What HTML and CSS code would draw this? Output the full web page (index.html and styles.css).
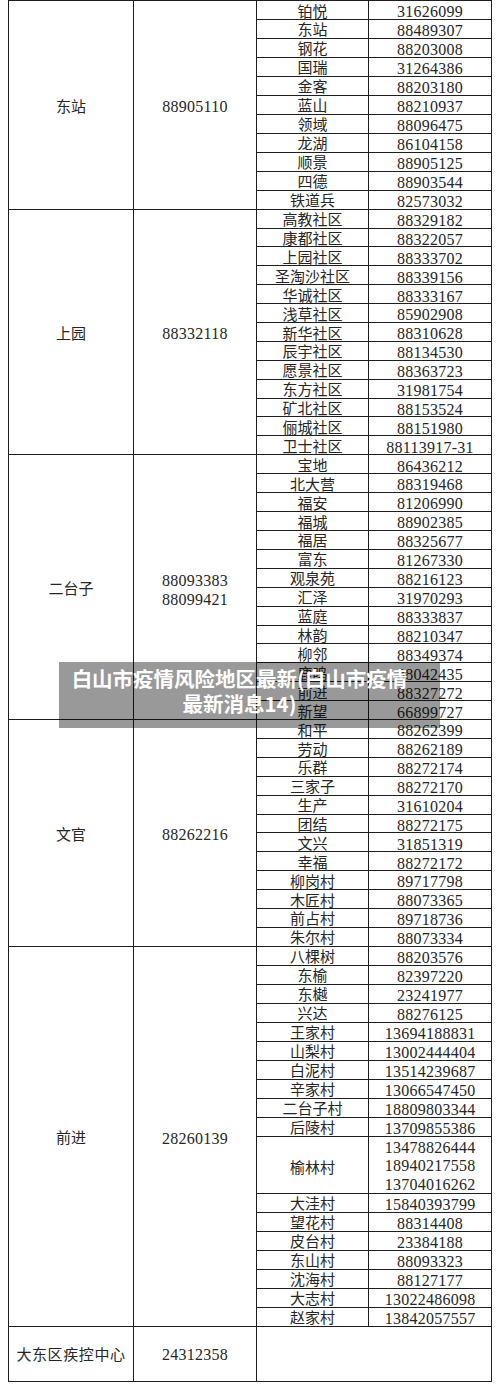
FILE: index.html
```html
<!DOCTYPE html>
<html lang="zh-CN">
<head>
<meta charset="utf-8">
<title>白山市疫情风险地区最新(白山市疫情最新消息14)</title>
<link rel="stylesheet" href="styles.css">
</head>
<body>
<div class="page">
  <div class="sheet">
    <!-- 东站 -->
    <div class="area span11">东站</div>
    <div class="phone span11">88905110</div>
    <div class="name">铂悦</div><div class="tel">31626099</div>
    <div class="name">东站</div><div class="tel">88489307</div>
    <div class="name">钢花</div><div class="tel">88203008</div>
    <div class="name">国瑞</div><div class="tel">31264386</div>
    <div class="name">金客</div><div class="tel">88203180</div>
    <div class="name">蓝山</div><div class="tel">88210937</div>
    <div class="name">领域</div><div class="tel">88096475</div>
    <div class="name">龙湖</div><div class="tel">86104158</div>
    <div class="name">顺景</div><div class="tel">88905125</div>
    <div class="name">四德</div><div class="tel">88903544</div>
    <div class="name">铁道兵</div><div class="tel">82573032</div>

    <!-- 上园 -->
    <div class="area span13">上园</div>
    <div class="phone span13">88332118</div>
    <div class="name">高教社区</div><div class="tel">88329182</div>
    <div class="name">康都社区</div><div class="tel">88322057</div>
    <div class="name">上园社区</div><div class="tel">88333702</div>
    <div class="name">圣淘沙社区</div><div class="tel">88339156</div>
    <div class="name">华诚社区</div><div class="tel">88333167</div>
    <div class="name">浅草社区</div><div class="tel">85902908</div>
    <div class="name">新华社区</div><div class="tel">88310628</div>
    <div class="name">辰宇社区</div><div class="tel">88134530</div>
    <div class="name">愿景社区</div><div class="tel">88363723</div>
    <div class="name">东方社区</div><div class="tel">31981754</div>
    <div class="name">矿北社区</div><div class="tel">88153524</div>
    <div class="name">俪城社区</div><div class="tel">88151980</div>
    <div class="name">卫士社区</div><div class="tel">88113917-31</div>

    <!-- 二台子 -->
    <div class="area span14">二台子</div>
    <div class="phone span14 two"><span>88093383</span><span>88099421</span></div>
    <div class="name">宝地</div><div class="tel">86436212</div>
    <div class="name">北大营</div><div class="tel">88319468</div>
    <div class="name">福安</div><div class="tel">81206990</div>
    <div class="name">福城</div><div class="tel">88902385</div>
    <div class="name">福居</div><div class="tel">88325677</div>
    <div class="name">富东</div><div class="tel">81267330</div>
    <div class="name">观泉苑</div><div class="tel">88216123</div>
    <div class="name">汇泽</div><div class="tel">31970293</div>
    <div class="name">蓝庭</div><div class="tel">88333837</div>
    <div class="name">林韵</div><div class="tel">88210347</div>
    <div class="name">柳邻</div><div class="tel">88349374</div>
    <div class="name">鹿鸣</div><div class="tel">88042435</div>
    <div class="name">前进</div><div class="tel">88327272</div>
    <div class="name">新望</div><div class="tel">66899727</div>

    <!-- 文官 -->
    <div class="area span12">文官</div>
    <div class="phone span12">88262216</div>
    <div class="name">和平</div><div class="tel">88262399</div>
    <div class="name">劳动</div><div class="tel">88262189</div>
    <div class="name">乐群</div><div class="tel">88272174</div>
    <div class="name">三家子</div><div class="tel">88272170</div>
    <div class="name">生产</div><div class="tel">31610204</div>
    <div class="name">团结</div><div class="tel">88272175</div>
    <div class="name">文兴</div><div class="tel">31851319</div>
    <div class="name">幸福</div><div class="tel">88272172</div>
    <div class="name">柳岗村</div><div class="tel">89717798</div>
    <div class="name">木匠村</div><div class="tel">88073365</div>
    <div class="name">前占村</div><div class="tel">89718736</div>
    <div class="name">朱尔村</div><div class="tel">88073334</div>

    <!-- 前进 -->
    <div class="area span20">前进</div>
    <div class="phone span20">28260139</div>
    <div class="name">八棵树</div><div class="tel">88203576</div>
    <div class="name">东榆</div><div class="tel">82397220</div>
    <div class="name">东樾</div><div class="tel">23241977</div>
    <div class="name">兴达</div><div class="tel">88276125</div>
    <div class="name">王家村</div><div class="tel">13694188831</div>
    <div class="name">山梨村</div><div class="tel">13002444404</div>
    <div class="name">白泥村</div><div class="tel">13514239687</div>
    <div class="name">辛家村</div><div class="tel">13066547450</div>
    <div class="name">二台子村</div><div class="tel">18809803344</div>
    <div class="name">后陵村</div><div class="tel">13709855386</div>
    <div class="name span3 tall">榆林村</div>
    <div class="tel span3 multi"><span>13478826444</span><span>18940217558</span><span>13704016262</span></div>
    <div class="name">大洼村</div><div class="tel">15840393799</div>
    <div class="name">望花村</div><div class="tel">88314408</div>
    <div class="name">皮台村</div><div class="tel">23384188</div>
    <div class="name">东山村</div><div class="tel">88093323</div>
    <div class="name">沈海村</div><div class="tel">88127177</div>
    <div class="name">大志村</div><div class="tel">13022486098</div>
    <div class="name">赵家村</div><div class="tel">13842057557</div>

    <!-- 大东区疾控中心 -->
    <div class="area center-name">大东区疾控中心</div>
    <div class="phone last">24312358</div>
    <div class="blank"></div>
  </div>

  <div class="caption">白山市疫情风险地区最新(白山市疫情最新消息14)</div>
</div>
</body>
</html>
```

FILE: styles.css
```css
html, body {
  margin: 0;
  padding: 0;
  background: #ffffff;
}

.page {
  position: relative;
  width: 500px;
  height: 1391px;
  overflow: hidden;
}

.sheet {
  margin-left: 8px;
  width: 484px;
  box-sizing: border-box;
  display: grid;
  grid-template-columns: 125px 123px 112px 123px;
  grid-template-rows:
    repeat(11, 18.98px)
    repeat(13, 18.9px)
    repeat(14, 18.93px)
    repeat(12, 18.89px)
    repeat(20, 19.015px)
    55px;
  border-top: 1px solid #1e1e1e;
  border-left: 1px solid #1e1e1e;
  color: #262626;
}

.sheet > div {
  box-sizing: border-box;
  border-right: 1px solid #1e1e1e;
  border-bottom: 1px solid #1e1e1e;
  text-align: center;
  white-space: nowrap;
  min-width: 0;
}

.area {
  grid-column: 1;
  display: flex;
  align-items: center;
  justify-content: center;
  padding-top: 2px;
  font-family: "Noto Sans CJK SC", sans-serif;
  font-weight: 400;
  font-size: 15px;
  line-height: 16px;
}

.center-name {
  letter-spacing: 0.6px;
  padding-top: 1px;
}

.phone {
  grid-column: 2;
  display: flex;
  flex-direction: column;
  align-items: center;
  justify-content: center;
  padding-top: 5px;
  font-family: "Liberation Serif", serif;
  font-size: 16px;
  letter-spacing: 0.25px;
  line-height: 16px;
}

.phone.two {
  line-height: 19px;
}

.phone.last {
  padding-top: 2.6px;
}

.name {
  grid-column: 3;
  padding-top: 1.5px;
  font-family: "Noto Sans CJK SC", sans-serif;
  font-weight: 400;
  font-size: 15px;
  line-height: 16px;
}

.name.tall {
  display: flex;
  align-items: center;
  justify-content: center;
  padding-top: 4.2px;
}

.tel {
  grid-column: 4;
  padding-top: 3.3px;
  font-family: "Liberation Serif", serif;
  font-size: 16px;
  letter-spacing: 0.25px;
  line-height: 16px;
}

.tel.multi {
  padding-top: 2px;
  line-height: 18.5px;
}

.tel.multi span {
  display: block;
}

.blank {
  grid-column: 3 / span 2;
}

.span3 { grid-row: span 3; }
.span11 { grid-row: span 11; }
.span12 { grid-row: span 12; }
.span13 { grid-row: span 13; }
.span14 { grid-row: span 14; }
.span20 { grid-row: span 20; }

.caption {
  position: absolute;
  left: 59px;
  top: 662px;
  width: 381px;
  height: 66px;
  box-sizing: border-box;
  padding: 4px 26px 0 6px;
  background: rgba(0, 0, 0, 0.4);
  color: #ffffff;
  font-family: "Noto Sans CJK SC", sans-serif;
  font-weight: 700;
  font-size: 20.5px;
  line-height: 25px;
  text-align: center;
}
```
